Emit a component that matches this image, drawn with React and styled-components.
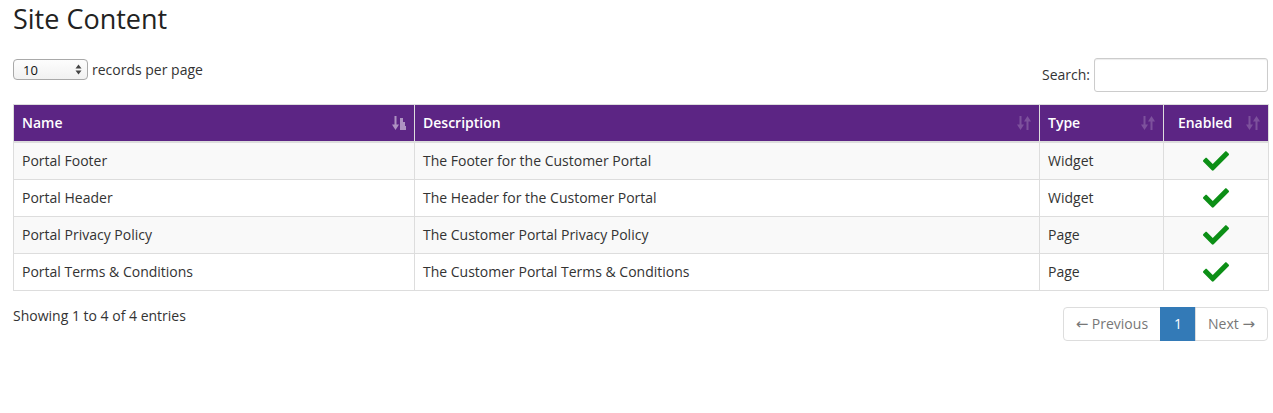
import React from 'react';
import styled, { createGlobalStyle } from 'styled-components';
import { FaCheck } from 'react-icons/fa';

const GlobalStyle = createGlobalStyle`
  body {
    margin: 0;
    background: #fff;
    font-family: 'Open Sans', 'Liberation Sans', sans-serif;
    font-size: 14px;
    line-height: 20px;
    color: #333;
  }
`;

const Page = styled.div`
  padding: 2px 5px 0 13px;
`;

const Title = styled.h1`
  margin: 0 0 22px;
  font-size: 27px;
  font-weight: 400;
  line-height: 34px;
  color: #222;
`;

const Controls = styled.div`
  display: flex;
  justify-content: space-between;
  align-items: flex-start;
  margin-bottom: 12px;
`;

const LengthLabel = styled.label`
  display: flex;
  align-items: center;
  gap: 4px;
  margin-top: 1px;
`;

const LengthSelect = styled.div`
  display: flex;
  align-items: center;
  justify-content: space-between;
  box-sizing: border-box;
  width: 75px;
  height: 21px;
  padding: 0 5px 0 9px;
  border: 1px solid #a9a9a9;
  border-radius: 4px;
  background: linear-gradient(#fdfdfd, #f1f1f1);
  font-size: 13px;
  color: #111;
`;

const SearchLabel = styled.label`
  display: flex;
  align-items: center;
  gap: 4px;
`;

const SearchInput = styled.input`
  box-sizing: border-box;
  width: 174px;
  height: 34px;
  border: 1px solid #ccc;
  border-radius: 3px;
  box-shadow: inset 0 1px 1px rgba(0, 0, 0, 0.075);
  font: inherit;
  padding: 6px 10px;
`;

const Table = styled.table`
  width: 100%;
  border-collapse: collapse;
  table-layout: fixed;
  border: 1px solid #ddd;
`;

const Th = styled.th`
  background: #5c2584;
  color: #fff;
  font-weight: 600;
  padding: 8px;
  border: 1px solid #ddd;
  border-top: none;
  border-bottom: 2px solid #ddd;
  text-align: ${p => (p.$center ? 'center' : 'left')};
`;

const ThInner = styled.div`
  display: flex;
  align-items: center;
  gap: 8px;
`;

const ThLabel = styled.span`
  flex: 1;
`;

const SortIcon = styled.svg`
  flex: none;
  width: 14px;
  height: 16px;
  fill: #fff;
  opacity: ${p => (p.$active ? 0.5 : 0.2)};
`;

const Row = styled.tr`
  background: ${p => (p.$odd ? '#f9f9f9' : '#fff')};
`;

const Td = styled.td`
  height: 20px;
  padding: 8px;
  border: 1px solid #ddd;
  text-align: ${p => (p.$center ? 'center' : 'left')};
  vertical-align: middle;
`;

const Check = styled(FaCheck)`
  display: block;
  width: 26px;
  height: 26px;
  margin: -3px auto;
  color: #0c8f16;
`;

const Footer = styled.div`
  display: flex;
  justify-content: space-between;
  align-items: flex-start;
  margin-top: 15px;
`;

const Pagination = styled.ul`
  display: flex;
  margin: 1px 0 0;
  padding: 0;
  list-style: none;
`;

const PageItem = styled.li`
  padding: 6px 12px;
  min-width: ${p => (p.$active ? '10px' : 'auto')};
  text-align: center;
  line-height: 20px;
  border: 1px solid ${p => (p.$active ? '#337ab7' : '#ddd')};
  margin-left: -1px;
  background: ${p => (p.$active ? '#337ab7' : '#fff')};
  color: ${p => (p.$active ? '#fff' : '#777')};
  &:first-child {
    margin-left: 0;
    border-radius: 4px 0 0 4px;
  }
  &:last-child {
    border-radius: 0 4px 4px 0;
  }
`;

const Arrow = styled.span`
  font-family: 'DejaVu Sans', sans-serif;
  font-size: 15px;
`;

const SortBoth = () => (
  <SortIcon viewBox="0 0 14 16">
    <rect x="2.5" y="1" width="2" height="9" />
    <polygon points="0,9.5 7,9.5 3.5,15" />
    <polygon points="7,6.5 14,6.5 10.5,1" />
    <rect x="9.5" y="6" width="2" height="9" />
  </SortIcon>
);

const SortAsc = () => (
  <SortIcon viewBox="0 0 14 16" $active>
    <rect x="2.5" y="1" width="2" height="9" />
    <polygon points="0,9.5 7,9.5 3.5,15" />
    <polygon points="8,15 14,15 14,11 13,11 13,7 11,7 11,3 8,3" />
  </SortIcon>
);

const Spinner = () => (
  <svg width="7" height="11" viewBox="0 0 7 11">
    <polygon points="0.5,4.5 6.5,4.5 3.5,0.5" fill="#444" />
    <polygon points="0.5,6.5 6.5,6.5 3.5,10.5" fill="#444" />
  </svg>
);

const rows = [
  ['Portal Footer', 'The Footer for the Customer Portal', 'Widget'],
  ['Portal Header', 'The Header for the Customer Portal', 'Widget'],
  ['Portal Privacy Policy', 'The Customer Portal Privacy Policy', 'Page'],
  ['Portal Terms & Conditions', 'The Customer Portal Terms & Conditions', 'Page'],
];

const columns = [
  { label: 'Name', width: 401, active: true },
  { label: 'Description', width: 625 },
  { label: 'Type', width: 124 },
  { label: 'Enabled', width: 105, center: true },
];

const App = () => (
  <Page>
    <GlobalStyle />
    <Title>Site Content</Title>
    <Controls>
      <LengthLabel>
        <LengthSelect>
          10
          <Spinner />
        </LengthSelect>
        records per page
      </LengthLabel>
      <SearchLabel>
        Search:
        <SearchInput type="search" />
      </SearchLabel>
    </Controls>
    <Table>
      <colgroup>
        {columns.map(c => (
          <col key={c.label} style={{ width: c.width }} />
        ))}
      </colgroup>
      <thead>
        <tr>
          {columns.map(c => (
            <Th key={c.label} $center={c.center}>
              <ThInner>
                <ThLabel>{c.label}</ThLabel>
                {c.active ? <SortAsc /> : <SortBoth />}
              </ThInner>
            </Th>
          ))}
        </tr>
      </thead>
      <tbody>
        {rows.map((r, i) => (
          <Row key={r[0]} $odd={i % 2 === 0}>
            <Td>{r[0]}</Td>
            <Td>{r[1]}</Td>
            <Td>{r[2]}</Td>
            <Td $center>
              <Check />
            </Td>
          </Row>
        ))}
      </tbody>
    </Table>
    <Footer>
      <div>Showing 1 to 4 of 4 entries</div>
      <Pagination>
        <PageItem>
          <Arrow>←</Arrow> Previous
        </PageItem>
        <PageItem $active>1</PageItem>
        <PageItem>
          Next <Arrow>→</Arrow>
        </PageItem>
      </Pagination>
    </Footer>
  </Page>
);

export default App;
